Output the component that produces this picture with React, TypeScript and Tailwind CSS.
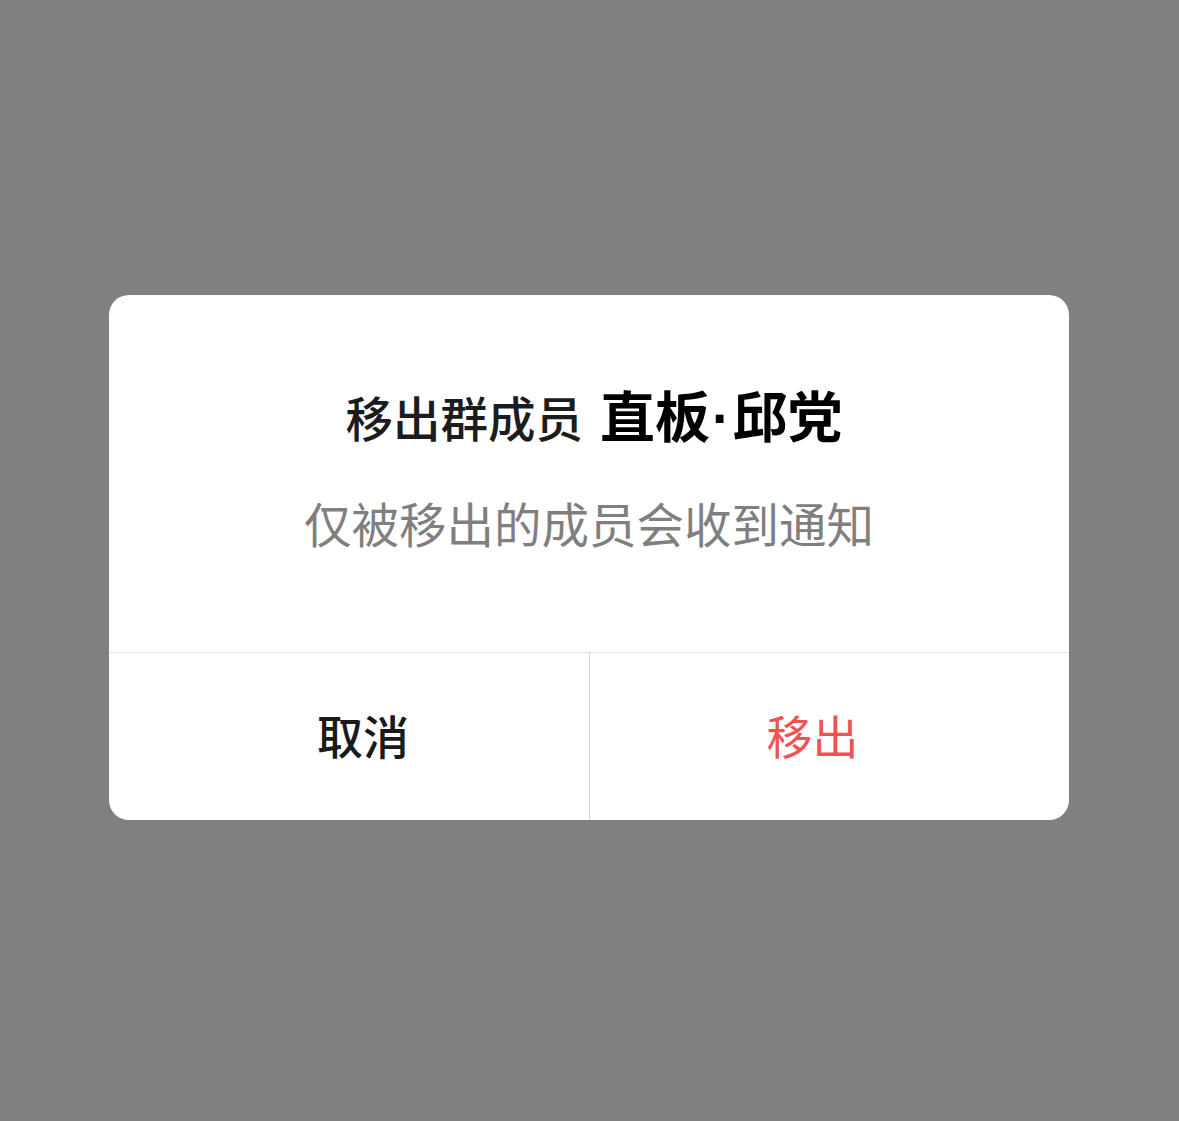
import React from "react";

const cjk = '"Noto Sans CJK SC", "Noto Sans", sans-serif';

export default function App() {
  return (
    <div
      className="h-[1121px] w-full bg-[#808080] pt-[295px]"
      style={{ fontFamily: cjk }}
    >
      {/* Dialog */}
      <div className="ml-[109px] flex h-[525px] w-[960px] flex-col overflow-hidden rounded-[20px] bg-white">
        {/* Body */}
        <div className="flex h-[357px] flex-col items-center pt-[88px]">
          <div className="flex h-[60px] items-baseline pl-[10px] leading-[60px]">
            <span className="text-[47.5px] font-medium text-[#1c1c1c]">移出群成员</span>
            <span className="ml-[17px] text-[55px] font-bold text-black">
              直板
              <span className="mx-[2px] font-['Liberation_Sans',sans-serif]">·</span>
              邱党
            </span>
          </div>
          <p className="mt-[50px] text-[47.5px] leading-[60px] text-[#7f7f7f]">
            仅被移出的成员会收到通知
          </p>
        </div>

        {/* Actions */}
        <div className="flex flex-1 border-t border-[#e2e2e2]">
          <button className="flex w-[481px] shrink-0 items-center justify-center border-r border-[#d6d6d6] pb-[4px] pl-[28px] text-[46px] font-medium text-[#1a1a1a]">
            取消
          </button>
          <button className="flex flex-1 items-center justify-center pb-[4px] pr-[34px] text-[46px] text-[#f05252]">
            移出
          </button>
        </div>
      </div>
    </div>
  );
}
